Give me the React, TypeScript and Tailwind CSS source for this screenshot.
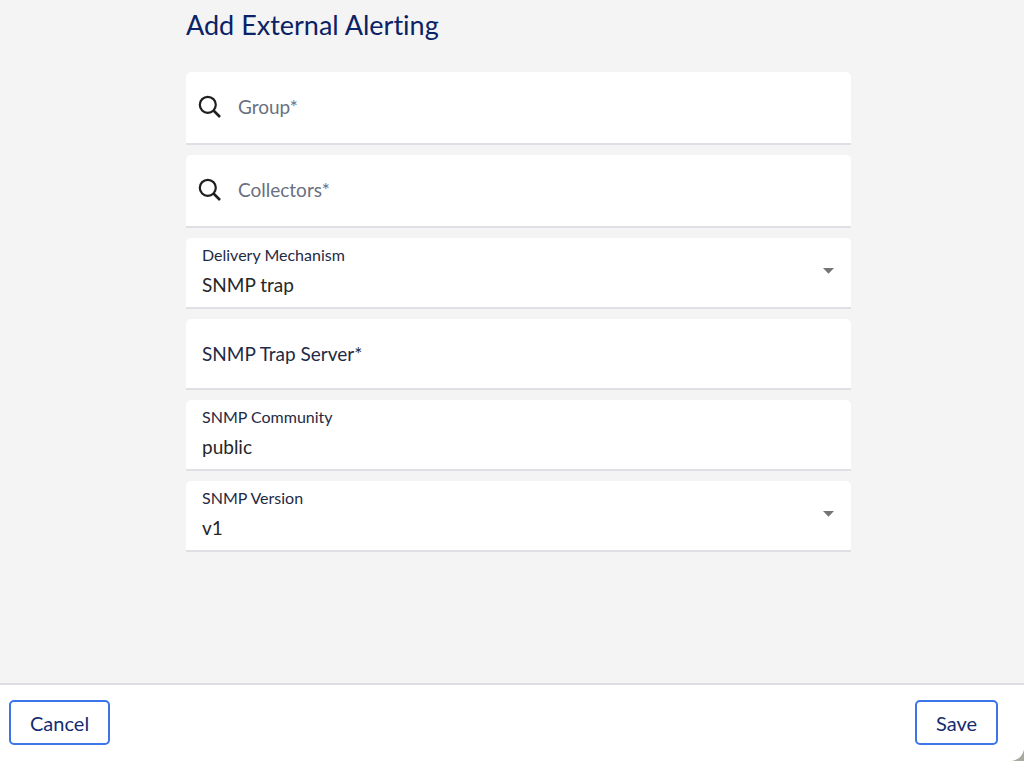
import { useState, type ReactNode } from "react";

const fieldBox = "relative rounded-t-[5px] border-b-2 border-[#dfdfe6] bg-white";
const smallLabel = "block text-[16px] leading-5 text-[#1f2a44]";
const valueText = "block w-full appearance-none bg-transparent text-[19px] leading-6 text-[#262626] outline-none";

function SearchIcon() {
  return (
    <svg width="24" height="24" viewBox="0 0 24 24" fill="none" stroke="#1f1f1f" aria-hidden="true">
      <circle cx="9.8" cy="9.8" r="8" strokeWidth="2.2" />
      <path d="M15.5 15.5L22 22" strokeWidth="2.7" />
    </svg>
  );
}

function SearchField({ id, label }: { id: string; label: string }) {
  return (
    <div className={`${fieldBox} flex h-[73px] items-center gap-4 pb-px pl-3 pr-4`}>
      <SearchIcon />
      <input
        id={id}
        type="text"
        aria-label={label}
        placeholder={label}
        className="min-w-0 flex-1 bg-transparent text-[19px] leading-6 text-[#262626] outline-none placeholder:text-[#697080]"
      />
    </div>
  );
}

function LabelledField({ id, label, children }: { id: string; label: string; children: ReactNode }) {
  return (
    <div className={`${fieldBox} flex h-[71px] flex-col gap-2 px-4 pt-[7px]`}>
      <label htmlFor={id} className={smallLabel}>
        {label}
      </label>
      {children}
    </div>
  );
}

function SelectField({ id, label, options }: { id: string; label: string; options: string[] }) {
  const [value, setValue] = useState(options[0]);

  return (
    <LabelledField id={id} label={label}>
      <select id={id} value={value} onChange={(e) => setValue(e.target.value)} className={valueText}>
        {options.map((option) => (
          <option key={option}>{option}</option>
        ))}
      </select>
      {/* Dropdown arrow */}
      <svg
        className="pointer-events-none absolute right-4 top-[30px]"
        width="13"
        height="6"
        viewBox="0 0 13 6"
        fill="#757575"
        aria-hidden="true"
      >
        <path d="M1 0H12L6.5 5.8Z" />
      </svg>
    </LabelledField>
  );
}

function FooterButton({ type, children }: { type: "button" | "submit"; children: ReactNode }) {
  return (
    <button
      type={type}
      className="h-[45px] rounded-[5px] border-2 border-[#3c74ea] bg-white px-[19px] text-[20px] leading-6 text-[#142c6e]"
    >
      {children}
    </button>
  );
}

export default function App() {
  return (
    <div className="min-h-screen bg-[#a9aa9f] font-['Lato',sans-serif] [font-variant-ligatures:none]">
      <form
        onSubmit={(e) => e.preventDefault()}
        className="flex min-h-screen flex-col overflow-hidden rounded-br-[14px] bg-[#f4f4f4]"
      >
        <main className="flex-1 pl-[13px]">
          <div className="mx-auto w-full max-w-[665px] pt-[7px]">
            <h1 className="text-[27px] leading-9 text-[#0a2266]">Add External Alerting</h1>

            <div className="mt-[29px] flex flex-col gap-[10px]">
              <SearchField id="group" label="Group*" />
              <SearchField id="collectors" label="Collectors*" />
              <SelectField id="delivery" label="Delivery Mechanism" options={["SNMP trap", "Email", "Syslog"]} />
              <div className={`${fieldBox} flex h-[71px] items-center px-4`}>
                <input
                  id="server"
                  type="text"
                  aria-label="SNMP Trap Server*"
                  placeholder="SNMP Trap Server*"
                  className={`${valueText} placeholder:text-[#1f2a44]`}
                />
              </div>
              <LabelledField id="community" label="SNMP Community">
                <input id="community" type="text" defaultValue="public" className={valueText} />
              </LabelledField>
              <SelectField id="version" label="SNMP Version" options={["v1", "v2c", "v3"]} />
            </div>
          </div>
        </main>

        <footer className="flex items-center justify-between border-t-2 border-[#dedfe2] bg-white pb-4 pl-[9px] pr-[26px] pt-[15px]">
          <FooterButton type="button">Cancel</FooterButton>
          <FooterButton type="submit">Save</FooterButton>
        </footer>
      </form>
    </div>
  );
}
